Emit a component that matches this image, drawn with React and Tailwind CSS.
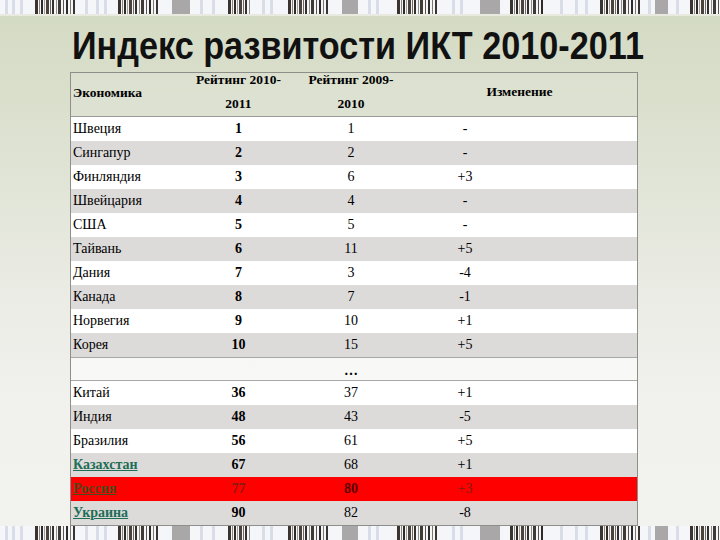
import React from "react";

const BAR = [
  [0, 3, "#3b342e"], [4, 1, "#8a847e"], [6, 2, "#2e2a26"], [9, 1, "#a29c96"],
  [11, 3, "#4a423b"], [15, 1, "#6e6860"], [17, 2, "#35302b"], [21, 1, "#948e88"],
  [23, 3, "#403a34"], [28, 1, "#5a544e"], [31, 2, "#2f2b27"], [35, 1, "#7d7770"],
  [38, 2, "#3a3530"], [42, 1, "#8a847e"],
];

const CLUSTERS = [
  [35, 75, "d"], [118, 160, "d"], [172, 190, "g"], [228, 250, "d"],
  [288, 328, "d"], [342, 358, "g"], [397, 438, "d"], [480, 500, "g"],
  [510, 545, "d"], [600, 640, "d"], [655, 668, "g"], [690, 720, "d"],
];

const FAINT = [5, 12, 20, 85, 96, 104, 200, 212, 262, 270, 368, 376, 452, 460, 560, 575, 585, 648, 676];

function Barcode() {
  const rects = [];
  FAINT.forEach((x, i) =>
    rects.push(<rect key={"f" + i} x={x} y={0} width={3} height={14} fill="#d9dde8" />)
  );
  CLUSTERS.forEach(([s, e, t], ci) => {
    if (t === "g") {
      rects.push(<rect key={"g" + ci} x={s} y={0} width={e - s} height={14} fill="#a9a7a8" />);
    } else {
      BAR.forEach(([o, w, c], bi) => {
        if (s + o + w <= e) {
          rects.push(<rect key={ci + "-" + bi} x={s + o} y={0} width={w} height={14} fill={c} />);
        }
      });
    }
  });
  return (
    <svg width="720" height="14" viewBox="0 0 720 14" className="block">
      <rect x="0" y="0" width="720" height="14" fill="#f5f6fa" />
      {rects}
    </svg>
  );
}

const rows = [
  ["Швеция", "1", "1", "-"],
  ["Сингапур", "2", "2", "-"],
  ["Финляндия", "3", "6", "+3"],
  ["Швейцария", "4", "4", "-"],
  ["США", "5", "5", "-"],
  ["Тайвань", "6", "11", "+5"],
  ["Дания", "7", "3", "-4"],
  ["Канада", "8", "7", "-1"],
  ["Норвегия", "9", "10", "+1"],
  ["Корея", "10", "15", "+5"],
];

const rows2 = [
  ["Китай", "36", "37", "+1"],
  ["Индия", "48", "43", "-5"],
  ["Бразилия", "56", "61", "+5"],
];

function Row({ r, gray }) {
  return (
    <div className={"grid grid-cols-[120px_95px_130px_1fr] h-[24px] items-center " + (gray ? "bg-[#dddada]" : "bg-white")}>
      <div className="pl-[2px]">{r[0]}</div>
      <div className="text-center font-bold">{r[1]}</div>
      <div className="text-center">{r[2]}</div>
      <div className="w-[98px] text-center">{r[3]}</div>
    </div>
  );
}

export default function App() {
  return (
    <div className="w-[720px] h-[540px] overflow-hidden flex flex-col bg-[linear-gradient(to_bottom,#d3dac2_0%,#dfe3d4_30%,#ebece5_55%,#f1f1ee_75%,#f2f2ef_100%)]">
      <Barcode />
      <div className="h-[2px] bg-[#e9eadf]" />
      <div className="h-[56px] pl-[72px] pt-[8px]">
        <div
          className="font-bold text-[38px] leading-[44px] text-[#111] origin-left scale-x-[0.9] whitespace-nowrap"
          style={{ fontFamily: '"Liberation Sans", Arial, sans-serif' }}
        >
          Индекс развитости ИКТ 2010-2011
        </div>
      </div>
      <div
        className="ml-[70px] w-[568px] border border-[#8e8e8a] text-[14px] text-black leading-[16px]"
        style={{ fontFamily: '"Liberation Serif", "Times New Roman", serif' }}
      >
        <div className="grid grid-cols-[120px_95px_130px_1fr] h-[44px] items-center font-bold text-[13.5px] border-b border-[#9a9a96] bg-[#e0e3d8]/40">
          <div className="pl-[2px] pb-[4px]">Экономика</div>
          <div className="text-center leading-[24px] self-start mt-[-5px]">Рейтинг 2010-<br />2011</div>
          <div className="text-center leading-[24px] self-start mt-[-5px]">Рейтинг 2009-<br />2010</div>
          <div className="text-center pr-[14px] pb-[6px]">Изменение</div>
        </div>
        {rows.map((r, i) => (
          <Row key={r[0]} r={r} gray={i % 2 === 1} />
        ))}
        <div className="grid grid-cols-[120px_95px_130px_1fr] h-[24px] items-end border-y border-[#a8a8a4] bg-white/55">
          <div />
          <div />
          <div className="text-center font-bold leading-[18px]">…</div>
          <div />
        </div>
        {rows2.map((r, i) => (
          <Row key={r[0]} r={r} gray={i % 2 === 1} />
        ))}
        <div className="grid grid-cols-[120px_95px_130px_1fr] h-[24px] items-center bg-[#dddada]">
          <div className="pl-[2px] font-bold underline text-[#1c6e56]">Казахстан</div>
          <div className="text-center font-bold">67</div>
          <div className="text-center">68</div>
          <div className="w-[98px] text-center">+1</div>
        </div>
        <div className="grid grid-cols-[120px_95px_130px_1fr] h-[24px] items-center bg-[#ff0000]">
          <div className="pl-[2px] font-bold underline text-[#4a4a1c]">Россия</div>
          <div className="text-center font-bold text-[#8a1a10]">77</div>
          <div className="text-center font-bold text-[#5a0000]">80</div>
          <div className="w-[98px] text-center text-[#8a1a10]">+3</div>
        </div>
        <div className="grid grid-cols-[120px_95px_130px_1fr] h-[24px] items-center bg-[#dddada]">
          <div className="pl-[2px] font-bold underline text-[#1c6e56]">Украина</div>
          <div className="text-center font-bold">90</div>
          <div className="text-center">82</div>
          <div className="w-[98px] text-center">-8</div>
        </div>
      </div>
      <div className="mt-auto">
        <Barcode />
      </div>
    </div>
  );
}
